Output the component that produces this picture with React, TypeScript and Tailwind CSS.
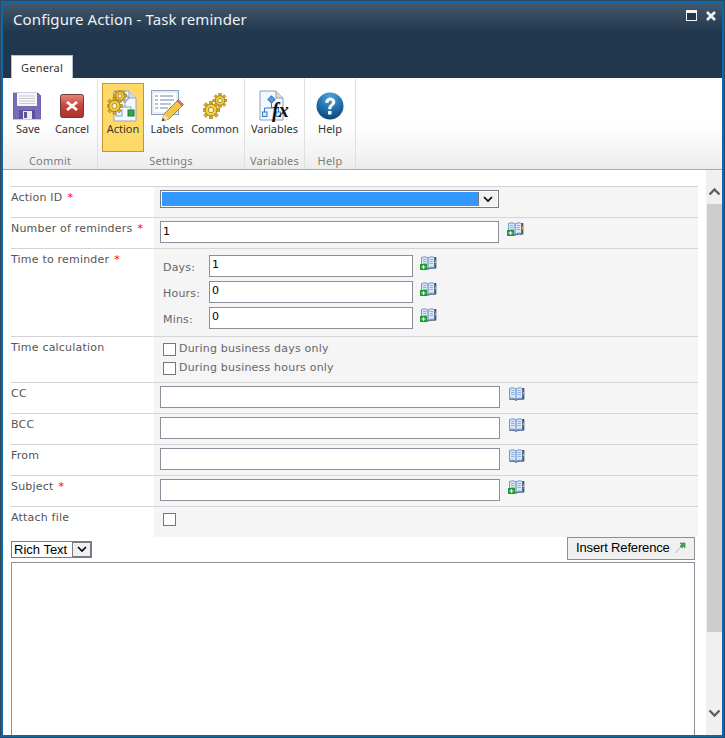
import React from "react";

const dejavu = "font-['DejaVu_Sans',sans-serif]";
const noto = "font-['Noto_Sans',sans-serif]";

const Gear = ({ x, y, r }: { x: number; y: number; r: number }) => {
  const teeth = [0, 45, 90, 135, 180, 225, 270, 315];
  return (
    <g>
      {teeth.map((a) => (
        <rect
          key={a}
          x={x - r * 0.22}
          y={y - r * 1.18}
          width={r * 0.44}
          height={r * 0.5}
          fill="#d9a81e"
          stroke="#8a6a10"
          strokeWidth="0.4"
          transform={`rotate(${a} ${x} ${y})`}
        />
      ))}
      <circle cx={x} cy={y} r={r * 0.8} fill="#f2cf3f" stroke="#8a6a10" strokeWidth="0.7" />
      <circle cx={x} cy={y} r={r * 0.36} fill="#fff8d8" stroke="#8a6a10" strokeWidth="0.7" />
    </g>
  );
};

const SaveIcon = () => (
  <svg width="28" height="28" viewBox="0 0 28 28" className="-ml-[3px]">
    <path d="M0 1h25l3 3v23H0z" fill="#7a6bb8" stroke="#5d5199" strokeWidth="0.6" />
    <rect x="4" y="1" width="20" height="13" fill="#f6f6f6" />
    <path d="M6 4h16M6 6.500h16M6 9h16M6 11.500h16" stroke="#c9c9d2" strokeWidth="1" />
    <rect x="6" y="18" width="16" height="9" fill="#5d5199" />
    <rect x="10" y="19" width="9" height="8" fill="#e8e8ee" />
    <rect x="11" y="20" width="3" height="6" fill="#5d5199" />
  </svg>
);

const CancelIcon = () => (
  <svg width="24" height="24" viewBox="0 0 24 24">
    <defs>
      <linearGradient id="cancelRed" x1="0" y1="0" x2="0" y2="1">
        <stop offset="0" stopColor="#e08a7e" />
        <stop offset="0.5" stopColor="#c9443a" />
        <stop offset="1" stopColor="#a5342c" />
      </linearGradient>
    </defs>
    <rect x="0.500" y="0.500" width="23" height="23" rx="2" fill="url(#cancelRed)" stroke="#6e3a34" />
    <path d="M7 8l10 8M17 8l-10 8" stroke="#fff" strokeWidth="2.800" />
  </svg>
);

const ActionIcon = () => (
  <svg width="32" height="32" viewBox="0 0 32 32">
    <path d="M7 1h15l7 7v23H7z" fill="#f4f7fb" stroke="#9aa7b5" />
    <path d="M22 1v7h7" fill="#d5dfe9" stroke="#9aa7b5" />
    <path d="M18 9v8h-6v6M18 17h6v6" fill="none" stroke="#7ea3cf" />
    <rect x="15" y="5" width="6" height="6" fill="#cfe0f4" stroke="#7ea3cf" transform="rotate(45 18 8)" />
    <rect x="9" y="20" width="6" height="6" fill="#eaf1f9" stroke="#7ea3cf" />
    <rect x="21" y="20" width="6" height="6" fill="#2fa84a" stroke="#1d7a33" />
    <Gear x={13} y={6} r={5.5} />
    <Gear x={7.5} y={16} r={7} />
  </svg>
);

const LabelsIcon = () => (
  <svg width="33" height="32" viewBox="0 0 33 32">
    <rect x="0.500" y="0.500" width="27" height="24" fill="#f3f7fc" stroke="#8da3bb" />
    <rect x="2" y="2" width="24" height="21" fill="#fff" stroke="#d5e0ec" />
    <path d="M4 6h3M9 6h13M4 10h3M9 10h14M4 14h3M9 14h11M4 18h3M9 18h8" stroke="#6f87a3" strokeWidth="1" />
    <path d="M11 31l2-7 14-14 5 5-14 14z" fill="#f2c64b" stroke="#7d6322" strokeWidth="0.7" />
    <path d="M26 11l5 5 1.500-1.500-5-5z" fill="#d97b7b" stroke="#7d3b3b" strokeWidth="0.5" />
    <path d="M11 31l2-7 5 5z" fill="#f3dfb5" />
    <path d="M11 31l0.800-3 2.200 2.200z" fill="#333" />
  </svg>
);

const CommonIcon = () => (
  <svg width="24" height="26" viewBox="0 0 24 26">
    <Gear x={17} y={7.5} r={6} />
    <Gear x={8} y={17} r={7.5} />
  </svg>
);

const VariablesIcon = () => (
  <svg width="32" height="32" viewBox="0 0 32 32">
    <path d="M1 1h16l7 7v22H1z" fill="#f4f7fb" stroke="#8ea0b3" />
    <path d="M17 1v7h7" fill="#d5dfe9" stroke="#8ea0b3" />
    <rect x="10" y="7" width="5" height="5" fill="#5a9be0" stroke="#3a78bd" transform="rotate(45 12.500 9.500)" />
    <path d="M12.500 13v5M5.500 22v-4h14v4" fill="none" stroke="#3a78bd" />
    <rect x="3.500" y="22" width="4.500" height="4.500" fill="#d9e8f8" stroke="#3a78bd" />
    <rect x="17" y="22" width="4.500" height="4.500" fill="#d9e8f8" stroke="#3a78bd" />
    <text x="13" y="27" fontFamily="'Liberation Serif',serif" fontStyle="italic" fontWeight="700" fontSize="20" fill="#111">
      fx
    </text>
  </svg>
);

const HelpIcon = () => (
  <svg width="28" height="28" viewBox="0 0 28 28">
    <defs>
      <radialGradient id="helpBlue" cx="0.5" cy="0.15" r="0.9">
        <stop offset="0" stopColor="#4fa3dc" />
        <stop offset="0.6" stopColor="#1c6aa8" />
        <stop offset="1" stopColor="#0d3f70" />
      </radialGradient>
    </defs>
    <circle cx="14" cy="14" r="13.500" fill="url(#helpBlue)" />
    <path d="M9.500 10.500c0-6 9.500-6 9.500-.5 0 3.500-4 3.500-4 7h-2.500c0-4.500 3.800-4.500 3.800-6.800 0-2.500-3.800-2.500-4 .3z" fill="#fff" stroke="#fff" strokeWidth="0.6" />
    <rect x="12" y="19" width="3.500" height="3.500" rx="0.5" fill="#fff" />
  </svg>
);

// address book, open; the green plus only on the rows that are required
const BookIcon = ({ plus }: { plus?: boolean }) => (
  <svg width="17" height="14" viewBox="0 0 17 14" className="shrink-0">
    <path d="M1.500 11.500V1.500C4 .5 6 .7 8 2c2-1.300 4-1.500 6.500-.5v10C12 10.800 10 11 8 12.300 6 11 4 10.800 1.500 11.500z" fill="#dce8f8" stroke="#5f88c4" strokeWidth="0.9" />
    <path d="M8 2v10.300" stroke="#4f78b5" strokeWidth="0.9" />
    <path d="M3 3.500h3.500M3 5.500h3.500M3 7.500h3.500M9.500 3.500H13M9.500 5.500H13M9.500 7.500H13" stroke="#7ba2d8" strokeWidth="0.8" />
    <path d="M1.500 12.500c2.500-.6 4.500-.4 6.500.8 2-1.200 4-1.400 6.500-.8" fill="none" stroke="#33507f" strokeWidth="1" />
    <rect x="14.500" y="1" width="1.800" height="11.500" fill="#33507f" />
    <rect x="14.800" y="3" width="1.300" height="1.800" fill="#d8402f" />
    <rect x="14.800" y="5.200" width="1.300" height="1.800" fill="#e8c020" />
    <rect x="14.800" y="7.400" width="1.300" height="1.800" fill="#3a9d3f" />
    {plus && (
      <>
        <rect x="0" y="8" width="7" height="6" fill="#1f9a35" />
        <path d="M1.500 11h4M3.500 9.200v3.600" stroke="#fff" strokeWidth="1.200" />
      </>
    )}
  </svg>
);

const Req = () => <span className="text-[#ff0000] ml-[5px]">*</span>;

const RibbonBtn = ({
  label,
  icon,
  w,
  active,
}: {
  label: string;
  icon: React.ReactNode;
  w: string;
  active?: boolean;
}) => (
  <div
    className={`${w} h-[69px] flex flex-col items-center ${
      active ? "bg-[#ffd968] border border-[#c9932f]" : "border border-transparent"
    }`}
  >
    <div className="h-[33px] mt-[5px] flex items-center justify-center">{icon}</div>
    <div className={`text-[11px] leading-[14px] text-[#333] ${noto}`}>{label}</div>
  </div>
);

const Group = ({ label, w, pl, children }: { label: string; w: string; pl?: string; children: React.ReactNode }) => (
  <div className={`${w} h-[91px] flex flex-col border-r border-[#e0e0e0]`}>
    <div className={`flex ${pl ?? ""} pt-[5px] h-[76px]`}>{children}</div>
    <div className={`text-center text-[11px] leading-[14px] tracking-[0.2px] text-[#7b7b7b] ${noto}`}>{label}</div>
  </div>
);

const Row = ({
  label,
  required,
  h,
  pt = "pt-[3px]",
  children,
}: {
  label: string;
  required?: boolean;
  h: string;
  pt?: string;
  children?: React.ReactNode;
}) => (
  <div className={`flex ${h} border-t border-[#d4d4d4]`}>
    <div className="w-[143px] shrink-0 pt-[4px] text-[11px] leading-[14px] tracking-[0.2px] text-[#555]">
      {label}
      {required && <Req />}
    </div>
    <div className={`flex-1 bg-[#f5f5f5] pl-[6px] ${pt}`}>{children}</div>
  </div>
);

const Field = ({ value, wide }: { value?: string; wide?: boolean }) => (
  <div
    className={`${wide ? "w-[340px]" : "w-[339px]"} h-[22px] bg-white border border-[#8a8f99] px-[2px] text-[11px] leading-[20px] text-black`}
  >
    {value}
  </div>
);

const TimeRow = ({ label, value }: { label: string; value: string }) => (
  <div className="flex items-center h-[22px]">
    <div className="w-[46px] text-[11px] text-[#666] leading-[14px] tracking-[0.2px] pt-[3px]">{label}</div>
    <div className="w-[204px] h-[22px] bg-white border border-[#8a8f99] px-[2px] text-[11px] leading-[18px] text-black">
      {value}
    </div>
    <div className="ml-[7px] -mt-[7px]">
      <BookIcon plus />
    </div>
  </div>
);

const Check = () => <div className="w-[13px] h-[13px] bg-white border border-[#767676] shrink-0" />;

const Chevron = () => (
  <svg width={10} height={7} viewBox="0 0 10 7">
    <path d="M1 1l4 4 4-4" fill="none" stroke="#000" strokeWidth="1.600" />
  </svg>
);

const FieldRow = ({ label, required }: { label: string; required?: boolean }) => (
  <Row label={label} required={required} h="h-[31px]">
    <div className="flex">
      <Field wide />
      <div className="ml-[8px] mt-[1px]">
        <BookIcon plus={required} />
      </div>
    </div>
  </Row>
);

export default function App() {
  return (
    <div className="w-[725px] h-[738px] overflow-hidden p-[1px] bg-[#33475b]">
      <div className={`w-full h-full overflow-hidden bg-white flex flex-col border-2 border-[#0a68ad] ${dejavu}`}>
        {/* title bar */}
        <div className="h-[75px] shrink-0 bg-gradient-to-b from-[#43586c] via-[#21374d] via-40% to-[#21374d] flex flex-col">
          <div className="flex justify-between items-start">
            <div className={`pl-[10px] pt-[6px] text-[15px] leading-[20px] tracking-[0.1px] text-[#eef2f5] ${noto}`}>
              Configure Action - Task reminder
            </div>
            <div className="flex items-center gap-[9px] pt-[7px] pr-[6px]">
              <svg width="11" height="11" viewBox="0 0 11 11">
                <rect x="0.500" y="0.500" width="10" height="10" fill="#21374d" stroke="#f2f4f6" />
                <rect x="1" y="1" width="9" height="2" fill="#f2f4f6" />
              </svg>
              <svg width="10" height="10" viewBox="0 0 10 10">
                <path d="M1 1l8 8M9 1l-8 8" stroke="#f2f4f6" strokeWidth="2.600" />
              </svg>
            </div>
          </div>
          <div
            className={`mt-auto ml-[8px] w-[62px] h-[23px] bg-white border-x border-t border-[#b8c1cb] text-center text-[11px] leading-[23px] tracking-[0.2px] text-[#333] ${noto}`}
          >
            General
          </div>
        </div>

        {/* ribbon */}
        <div className="h-[92px] shrink-0 flex bg-gradient-to-b from-white via-white via-50% to-[#ededed] border-b border-[#a9a9a9]">
          <Group label="Commit" w="w-[95px]" pl="pl-[3px]">
            <RibbonBtn label="Save" w="w-[44px]" icon={<SaveIcon />} />
            <RibbonBtn label="Cancel" w="w-[44px]" icon={<CancelIcon />} />
          </Group>
          <Group label="Settings" w="w-[147px]" pl="pl-[4px]">
            <RibbonBtn label="Action" w="w-[42px]" active icon={<ActionIcon />} />
            <RibbonBtn label="Labels" w="w-[46px]" icon={<LabelsIcon />} />
            <RibbonBtn label="Common" w="w-[50px]" icon={<CommonIcon />} />
          </Group>
          <Group label="Variables" w="w-[60px]">
            <RibbonBtn label="Variables" w="w-[59px]" icon={<VariablesIcon />} />
          </Group>
          <Group label="Help" w="w-[51px]">
            <RibbonBtn label="Help" w="w-[50px]" icon={<HelpIcon />} />
          </Group>
        </div>

        {/* body */}
        <div className="flex-1 min-h-0 flex overflow-hidden">
          <div className="w-[703px] shrink-0 pl-[8px] pt-[16px]">
            <div className="w-[687px]">
              <Row label="Action ID" required h="h-[31px]">
                <div className="w-[339px] h-[18px] bg-white border border-[#767b85] flex p-[1px]">
                  <div className="flex-1 bg-[#3399ff]" />
                  <div className="w-[19px] bg-[#f0f0f0] border-l border-[#767b85] flex items-center justify-center">
                    <Chevron />
                  </div>
                </div>
              </Row>
              <Row label="Number of reminders" required h="h-[31px]">
                <div className="flex">
                  <Field value="1" />
                  <div className="ml-[8px] mt-[1px]">
                    <BookIcon plus />
                  </div>
                </div>
              </Row>
              <Row label="Time to reminder" required h="h-[88px]" pt="pt-[6px] pl-[9px]">
                <div className="flex flex-col gap-[4px]">
                  <TimeRow label="Days:" value="1" />
                  <TimeRow label="Hours:" value="0" />
                  <TimeRow label="Mins:" value="0" />
                </div>
              </Row>
              <Row label="Time calculation" h="h-[46px]" pt="pt-[6px] pl-[9px]">
                <div className="flex flex-col gap-[6px] text-[11px] leading-[13px] tracking-[0.2px] text-[#666]">
                  <div className="flex gap-[3px]">
                    <Check />
                    <span className="-mt-[1px]">During business days only</span>
                  </div>
                  <div className="flex gap-[3px]">
                    <Check />
                    <span className="-mt-[1px]">During business hours only</span>
                  </div>
                </div>
              </Row>
              <FieldRow label="CC" />
              <FieldRow label="BCC" />
              <FieldRow label="From" />
              <FieldRow label="Subject" required />
              <Row label="Attach file" h="h-[31px]" pt="pt-[6px] pl-[9px]">
                <Check />
              </Row>
            </div>

            <div className="flex justify-between items-start w-[684px] h-[25px]">
              <div className="mt-[4px] w-[81px] h-[17px] bg-white border border-[#767b85] flex font-['Liberation_Sans',sans-serif] text-[13px] leading-[15px] text-black">
                <span className="flex-1 pl-[2px]">Rich Text</span>
                <div className="w-[19px] bg-[#f0f0f0] border border-[#767b85] flex items-center justify-center">
                  <Chevron />
                </div>
              </div>
              <div className="w-[128px] h-[23px] bg-[#f0f0f0] border border-[#8a8f99] flex items-center gap-[4px] pl-[8px] pb-[2px] font-['Liberation_Sans',sans-serif] text-[13px] tracking-[-0.15px] text-black">
                Insert Reference
                <svg width="12" height="12" viewBox="0 0 12 12">
                  <path d="M6 1h5v5l-1.500-1.500L8 6 6 4l1.500-1.500z" fill="#3ea553" stroke="#1d7a33" strokeWidth="0.5" />
                  <path d="M6.500 5.500l-1 1M4.500 7.500l-1 1M2.500 9.500l-1 1" stroke="#3ea553" strokeWidth="1" />
                </svg>
              </div>
            </div>

            <div className="w-[684px] h-[180px] bg-white border border-[#8a8f99]" />
          </div>

          {/* scrollbar */}
          <div className="w-[16px] shrink-0 bg-[#f0f0f0] flex flex-col items-center">
            <div className="h-[34px] pt-[17px] flex justify-center">
              <svg width="13" height="9" viewBox="0 0 13 9">
                <path d="M1.500 7.500l5-5 5 5" fill="none" stroke="#606060" strokeWidth="2.400" />
              </svg>
            </div>
            <div className="w-[15px] h-[428px] bg-[#cdcdcd]" />
            <div className="mt-[77px]">
              <svg width="13" height="9" viewBox="0 0 13 9">
                <path d="M1.500 1.500l5 5 5-5" fill="none" stroke="#606060" strokeWidth="2.400" />
              </svg>
            </div>
          </div>
        </div>
      </div>
    </div>
  );
}
